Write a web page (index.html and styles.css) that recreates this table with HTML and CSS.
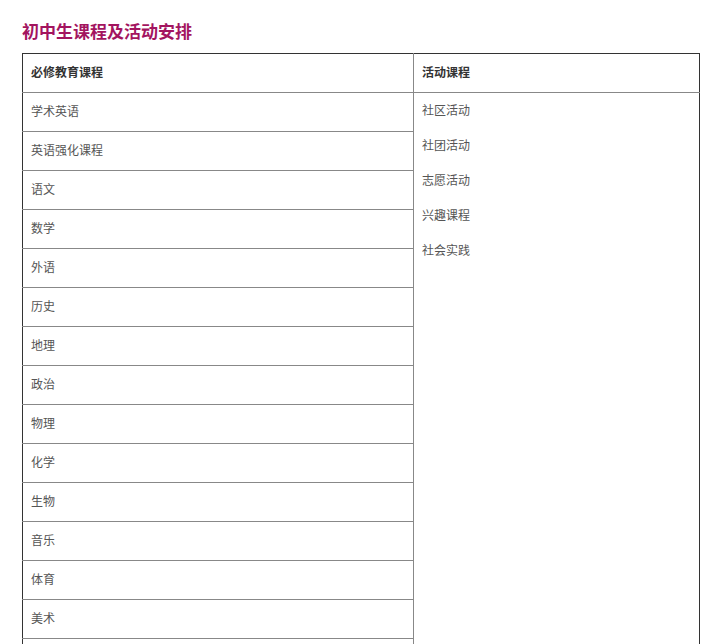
FILE: index.html
```html
<!DOCTYPE html>
<html lang="zh">
<head>
<meta charset="utf-8">
<link rel="stylesheet" href="styles.css">
</head>
<body>
<div class="page">
  <h2 class="title">初中生课程及活动安排</h2>
  <table class="plan">
    <thead>
      <tr>
        <th class="col-main">必修教育课程</th>
        <th class="col-side">活动课程</th>
      </tr>
    </thead>
    <tbody>
      <tr>
        <td>学术英语</td>
        <td class="side" rowspan="15">
          <ul class="acts">
            <li>社区活动</li>
            <li>社团活动</li>
            <li>志愿活动</li>
            <li>兴趣课程</li>
            <li>社会实践</li>
          </ul>
        </td>
      </tr>
      <tr><td>英语强化课程</td></tr>
      <tr><td>语文</td></tr>
      <tr><td>数学</td></tr>
      <tr><td>外语</td></tr>
      <tr><td>历史</td></tr>
      <tr><td>地理</td></tr>
      <tr><td>政治</td></tr>
      <tr><td>物理</td></tr>
      <tr><td>化学</td></tr>
      <tr><td>生物</td></tr>
      <tr><td>音乐</td></tr>
      <tr><td>体育</td></tr>
      <tr><td>美术</td></tr>
      <tr><td>信息技术</td></tr>
    </tbody>
  </table>
</div>
</body>
</html>
```

FILE: styles.css
```css
html, body {
  margin: 0;
  padding: 0;
  background: #fff;
}
body {
  font-family: "Noto Sans CJK SC", "Liberation Sans", sans-serif;
  color: #555;
}
.page {
  padding: 20px 27px 0 22px;
}
.title {
  margin: 0 0 11px 0;
  font-size: 17px;
  line-height: 22px;
  font-weight: bold;
  color: #a3145f;
}
.plan {
  width: 678px;
  border-collapse: collapse;
  border: 1px solid #333;
  font-size: 12px;
}
.plan th,
.plan td {
  text-align: left;
  padding: 0 8px 2px 8px;
  height: 36px;
  line-height: 16px;
  border-bottom: 1px solid #888;
  vertical-align: middle;
}
.plan th {
  color: #333;
  font-weight: bold;
}
.col-main {
  width: 374px;
  border-right: 1px solid #888;
}
.plan td {
  border-right: 1px solid #888;
}
.plan td.side {
  vertical-align: top;
  border-right: 1px solid #333;
  border-bottom: none;
}
.acts {
  list-style: none;
  margin: -1px 0 0 0;
  padding: 0;
}
.acts li {
  line-height: 35px;
}
```
